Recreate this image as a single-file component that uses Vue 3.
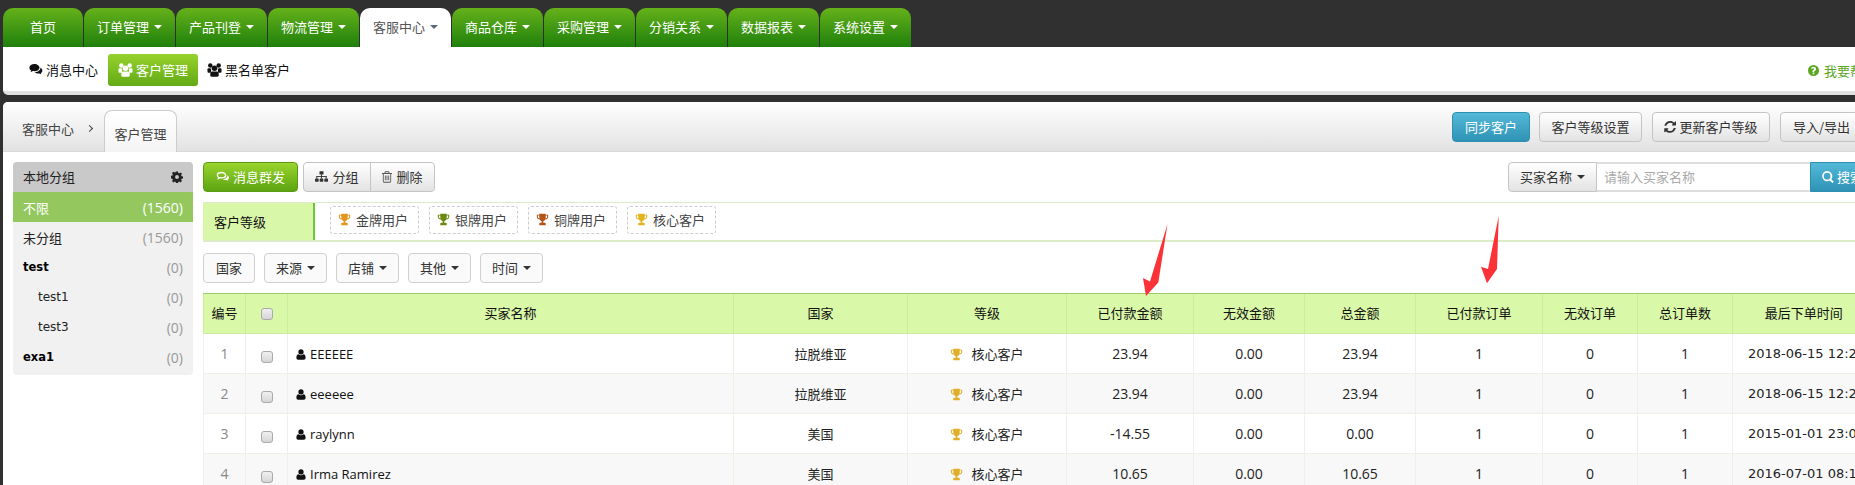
<script setup>
const navItems = [
  { name: '首页', plain: true, w: 'first' },
  { name: '订单管理' }, { name: '产品刊登' }, { name: '物流管理' },
  { name: '客服中心', active: true }, { name: '商品仓库' }, { name: '采购管理' },
  { name: '分销关系' }, { name: '数据报表' }, { name: '系统设置' }
]
const groups = [
  { name: '不限', count: '(1560)', cls: 'on' },
  { name: '未分组', count: '(1560)' },
  { name: 'test', count: '(0)', cls: 'bold' },
  { name: 'test1', count: '(0)', cls: 'sub' },
  { name: 'test3', count: '(0)', cls: 'sub' },
  { name: 'exa1', count: '(0)', cls: 'bold' }
]
const levels = [
  { name: '金牌用户', color: '#e2961f' },
  { name: '银牌用户', color: '#6c8a10' },
  { name: '铜牌用户', color: '#b0541a' },
  { name: '核心客户', color: '#e2b420' }
]
const filters = [
  { name: '国家' }, { name: '来源', caret: true }, { name: '店铺', caret: true },
  { name: '其他', caret: true }, { name: '时间', caret: true }
]
const cols = [42, 42, 446, 174, 159, 127, 111, 111, 127, 95, 95, 142]
const heads = ['编号', '', '买家名称', '国家', '等级', '已付款金额', '无效金额', '总金额', '已付款订单', '无效订单', '总订单数', '最后下单时间']
const rows = [
  ['1', 'EEEEEE', '拉脱维亚', '23.94', '0.00', '23.94', '1', '0', '1', '2018-06-15 12:26:11'],
  ['2', 'eeeeee', '拉脱维亚', '23.94', '0.00', '23.94', '1', '0', '1', '2018-06-15 12:26:11'],
  ['3', 'raylynn', '美国', '-14.55', '0.00', '0.00', '1', '0', '1', '2015-01-01 23:05:42'],
  ['4', 'Irma Ramirez', '美国', '10.65', '0.00', '10.65', '1', '0', '1', '2016-07-01 08:15:20']
]
</script>

<template>
  <div class="page">
    <svg class="sprite" width="0" height="0">
      <defs>
        <symbol id="i-trophy" viewBox="0 0 16 16"><path d="M4 1h8v1h3v2.500c0 2-1.500 3.300-3.500 3.600C11 9 10 9.800 9 10.100V12h1.500c.8 0 1.500.5 1.500 1.300V15H4v-1.700C4 12.500 4.700 12 5.500 12H7v-1.900C6 9.800 5 9 4.500 8.100 2.500 7.800 1 6.500 1 4.500V2h3V1zM2.300 3.200v1.300c0 1.100.8 2 2 2.300C4.100 6 4 4.600 4 3.200H2.300zm9.700 0c0 1.400-.1 2.800-.3 3.600 1.200-.3 2-1.200 2-2.300V3.200H12z"/></symbol>
        <symbol id="i-user" viewBox="0 0 14 16"><circle cx="7" cy="4.300" r="3.800"/><path d="M3.400 7.600C4.300 8.600 5.600 9.200 7 9.200s2.700-.6 3.600-1.600c2.200.2 3.100 2.300 3.100 5.200 0 1.700-1 2.900-2.600 2.900H2.900C1.300 15.700.3 14.500.3 12.800c0-2.900.9-5 3.100-5.200z"/></symbol>
        <symbol id="i-group" viewBox="0 0 16 15"><circle cx="3.500" cy="2.600" r="2.400"/><circle cx="12.500" cy="2.600" r="2.400"/><circle cx="8" cy="5.600" r="3"/><rect x="0.500" y="5.500" width="3.800" height="5" rx="1.200"/><rect x="11.700" y="5.500" width="3.800" height="5" rx="1.200"/><rect x="3.500" y="9" width="9" height="5.800" rx="1.800"/></symbol>
        <symbol id="i-comments" viewBox="0 0 18 16"><path d="M7 1C3.300 1 .5 3 .5 5.700c0 1.500.9 2.900 2.400 3.800-.2.700-.6 1.300-1.100 1.800 1.200-.2 2.300-.7 3.200-1.400.6.100 1.300.2 2 .2 3.700 0 6.500-2 6.500-4.400S10.700 1 7 1z"/><path d="M14.700 5.500c.4 3-2.500 5.700-7.200 6 .9 1 2.500 1.600 4.200 1.600.5 0 1 0 1.500-.1.800.6 1.800 1 2.800 1.200-.4-.4-.7-1-.9-1.500 1.300-.7 2.100-1.900 2.100-3.100 0-1.700-1-3-2.500-4.100z"/></symbol>
        <symbol id="i-comments-o" viewBox="0 0 18 16"><path fill="none" stroke="currentColor" stroke-width="1.800" d="M7 2C3.800 2 1.500 3.700 1.500 5.700c0 1.200.8 2.300 2 3-.1.500-.3.900-.5 1.300.8-.2 1.500-.6 2.100-1 .6.100 1.200.2 1.900.2 3.200 0 5.500-1.700 5.500-3.500S10.200 2 7 2z"/><path d="M14.800 5.600c.4 2.600-2.400 5-5.900 5.300.7.700 1.900 1.100 3.100 1.100.5 0 .9 0 1.400-.1.600.5 1.500.9 2.400 1.100-.3-.4-.6-.9-.7-1.300 1.100-.6 1.900-1.600 1.900-2.700 0-1.300-.8-2.400-2.200-3.400z"/></symbol>
        <symbol id="i-cog" viewBox="0 0 16 16"><path fill-rule="evenodd" d="M6.700.5h2.600l.4 2 1.300.6 1.800-1.100 1.800 1.800-1.100 1.800.6 1.300 2 .4v2.600l-2 .4-.6 1.300 1.100 1.800-1.800 1.800-1.800-1.100-1.300.6-.4 2H6.700l-.4-2-1.300-.6-1.800 1.100-1.800-1.800 1.100-1.800-.6-1.300-2-.4V6.300l2-.4.6-1.300L1.400 2.800l1.800-1.800L5 2.100l1.300-.6.4-2zM8 5.400a2.600 2.600 0 1 0 0 5.200 2.600 2.600 0 0 0 0-5.200z"/></symbol>
        <symbol id="i-sitemap" viewBox="0 0 16 13"><rect x="5.500" y="0" width="5" height="4" rx=".6"/><rect x="0" y="9" width="4.500" height="4" rx=".6"/><rect x="5.750" y="9" width="4.500" height="4" rx=".6"/><rect x="11.500" y="9" width="4.500" height="4" rx=".6"/><rect x="7.400" y="4" width="1.200" height="5"/><rect x="1.700" y="6" width="1.200" height="3"/><rect x="13.100" y="6" width="1.200" height="3"/><rect x="1.700" y="6" width="12.600" height="1.100"/></symbol>
        <symbol id="i-trash" viewBox="0 0 14 16"><path fill-rule="evenodd" d="M5 0h4c.6 0 1 .4 1.200 1l.5 1.500H14v1.200h-1.200V14c0 1.100-.8 2-1.700 2H2.900c-.9 0-1.700-.9-1.700-2V3.700H0V2.500h3.300L3.800 1C4 .4 4.400 0 5 0zm.1 1.300-.4 1.200h4.600l-.4-1.200H5.100zM2.400 3.700V14c0 .5.300.8.500.8h8.200c.2 0 .5-.3.500-.8V3.700H2.400zM4 6h1.200v6.700H4V6zm2.400 0h1.200v6.700H6.400V6zm2.400 0H10v6.700H8.800V6z"/></symbol>
        <symbol id="i-refresh" viewBox="0 0 14 14"><path d="M13.700 8.500C13 11.600 10.300 13.800 7 13.800c-1.800 0-3.500-.7-4.700-1.900l-1.100 1.100c-.4.400-.9.100-.9-.4V8.900c0-.3.200-.5.500-.5h3.700c.5 0 .8.500.4.900L3.800 10.400c.8.800 2 1.300 3.200 1.300 1.800 0 3.400-1.100 4.100-2.700.1-.3.200-.5.300-.8h2.100c.1 0 .2.200.2.300zM14 1v3.700c0 .3-.2.500-.5.500H9.800c-.5 0-.8-.5-.4-.9l1.100-1.100C9.700 2.400 8.500 2 7.200 2 5.400 2 3.800 3.100 3.100 4.700c-.1.300-.2.500-.3.800H.7C.6 5.500.5 5.300.5 5.200 1.200 2.100 3.900 0 7.200 0c1.800 0 3.500.7 4.800 1.900L13.100.6c.4-.4.900-.1.900.4z"/></symbol>
        <symbol id="i-search" viewBox="0 0 14 14"><path fill-rule="evenodd" d="M6 0a6 6 0 0 1 4.800 9.600l3 3-1.600 1.600-3-3A6 6 0 1 1 6 0zm0 2.100a3.900 3.900 0 1 0 0 7.800 3.900 3.900 0 0 0 0-7.800z"/></symbol>
        <symbol id="i-help" viewBox="0 0 14 14"><path fill-rule="evenodd" d="M7 0a7 7 0 1 1 0 14A7 7 0 0 1 7 0zM6 9.700v2h2v-2H6zm1-7.400c-1.600 0-2.800.8-3.200 1.900l1.400 1c.4-.7.900-1.100 1.600-1.100.7 0 1.200.3 1.200.9 0 .5-.4.800-1 1.200-.8.500-1.300 1.100-1.300 2v.8h2v-.5c0-.4.300-.6.900-1 .8-.5 1.500-1.200 1.500-2.500 0-1.700-1.500-2.700-3.100-2.700z"/></symbol>
      </defs>
    </svg>

    <nav class="nav">
      <a v-for="n in navItems" :key="n.name" class="tab" :class="{ active: n.active, first: n.w }">
        {{ n.name }}<i v-if="!n.plain" class="caret"></i>
      </a>
    </nav>

    <div class="subbar">
      <a class="sub"><svg class="ic c"><use href="#i-comments" /></svg>消息中心</a>
      <a class="sub on"><svg class="ic g"><use href="#i-group" /></svg>客户管理</a>
      <a class="sub"><svg class="ic g"><use href="#i-group" /></svg>黑名单客户</a>
      <a class="help"><svg class="ic h"><use href="#i-help" /></svg>我要帮助</a>
    </div>

    <section class="panel">
      <header class="head">
        <span class="crumb">客服中心<i class="chev"></i></span>
        <span class="crumb-tab">客户管理</span>
        <div class="head-btns">
          <button class="btn blue">同步客户</button>
          <button class="btn">客户等级设置</button>
          <button class="btn"><svg class="ic r"><use href="#i-refresh" /></svg>更新客户等级</button>
          <button class="btn wide">导入/导出</button>
        </div>
      </header>

      <div class="body">
        <aside class="side">
          <div class="side-head">本地分组<svg class="ic cog"><use href="#i-cog" /></svg></div>
          <div v-for="g in groups" :key="g.name" class="grp" :class="g.cls">
            <span class="gname">{{ g.name }}</span><span class="cnt">{{ g.count }}</span>
          </div>
        </aside>

        <main class="main">
          <div class="tools">
            <button class="btn green"><svg class="ic c"><use href="#i-comments-o" /></svg>消息群发</button>
            <div class="btn-group">
              <button class="btn"><svg class="ic s"><use href="#i-sitemap" /></svg>分组</button>
              <button class="btn"><svg class="ic t"><use href="#i-trash" /></svg>删除</button>
            </div>
            <div class="search">
              <button class="btn sel">买家名称<i class="caret dark"></i></button>
              <div class="input">请输入买家名称</div>
              <button class="btn blue go"><svg class="ic se"><use href="#i-search" /></svg>搜索</button>
            </div>
          </div>

          <div class="levels">
            <div class="lv-label">客户等级</div>
            <div v-for="l in levels" :key="l.name" class="lv">
              <svg class="ic tr" :style="{ color: l.color }"><use href="#i-trophy" /></svg>{{ l.name }}
            </div>
          </div>

          <div class="filters">
            <button v-for="f in filters" :key="f.name" class="fbtn">{{ f.name }}<i v-if="f.caret" class="caret dark"></i></button>
          </div>

          <table class="tbl">
            <colgroup><col v-for="(c, i) in cols" :key="i" :style="{ width: c + 'px' }" /></colgroup>
            <thead>
              <tr>
                <th v-for="(h, i) in heads" :key="i"><i v-if="i === 1" class="cb"></i>{{ h }}</th>
              </tr>
            </thead>
            <tbody>
              <tr v-for="r in rows" :key="r[0]">
                <td class="idx">{{ r[0] }}</td>
                <td><i class="cb low"></i></td>
                <td class="name"><svg class="ic u"><use href="#i-user" /></svg>{{ r[1] }}</td>
                <td class="cn">{{ r[2] }}</td>
                <td class="cn"><svg class="ic tr core"><use href="#i-trophy" /></svg>核心客户</td>
                <td>{{ r[3] }}</td>
                <td>{{ r[4] }}</td>
                <td>{{ r[5] }}</td>
                <td>{{ r[6] }}</td>
                <td>{{ r[7] }}</td>
                <td>{{ r[8] }}</td>
                <td class="time">{{ r[9] }}</td>
              </tr>
            </tbody>
          </table>
        </main>
      </div>
    </section>

    <svg class="arrow a1" viewBox="0 0 40 80"><path d="M37.500 4 L28.300 62.500 L16 76 L13 58 L20 61.500 Z" /></svg>
    <svg class="arrow a2" viewBox="0 0 40 80"><path d="M28.700 6 L27 59 L17 73.300 L11 56.700 L18 59 Z" /></svg>
  </div>
</template>

<style>
html, body { margin: 0; background: #303030; }
</style>

<style scoped>
.page {
  position: relative;
  width: 1855px;
  height: 485px;
  overflow: hidden;
  background: #303030;
  padding-top: 8px;
  box-sizing: border-box;
  font-family: "Noto Sans CJK SC", "DejaVu Sans", sans-serif;
  font-size: 13px;
  color: #333;
}
.sprite { position: absolute; }
.ic { fill: currentColor; display: inline-block; flex: none; }
.nav { display: flex; gap: 1px; padding-left: 3px; height: 39px; }
.tab {
  width: 91px;
  height: 39px;
  box-sizing: border-box;
  padding-bottom: 2px;
  border-radius: 10px 10px 0 0;
  background: linear-gradient(#65b11a, #1f800c);
  color: #fff;
  display: flex;
  align-items: center;
  justify-content: center;
  line-height: 1;
}
.tab.first { width: 80px; }
.tab.active { background: #fff; color: #555; }
.caret {
  display: inline-block;
  width: 0;
  height: 0;
  margin-left: 5px;
  border-left: 4px solid transparent;
  border-right: 4px solid transparent;
  border-top: 4px solid #fff;
}
.tab.active .caret { border-top-color: #5a6a7a; }
.caret.dark { border-top-color: #333; }
.subbar {
  margin-left: 3px;
  width: 1880px;
  height: 48px;
  background: #fff;
  box-sizing: border-box;
  border-bottom: 4px solid #e0e0e0;
  border-radius: 0 0 5px 5px;
  display: flex;
  align-items: flex-start;
  padding: 7px 0 0 26px;
  color: #111;
}
.sub {
  height: 32px;
  box-sizing: border-box;
  padding: 0 10px 1px 0;
  display: flex;
  align-items: center;
  border-radius: 3px;
}
.sub.on {
  width: 90px;
  padding: 0 0 1px 10px;
  margin-right: 9px;
  background: linear-gradient(#96d22c, #63aa16);
  color: #fff;
}
.sub .c { width: 14px; height: 13px; margin-right: 3px; }
.sub .g { width: 15px; height: 14px; margin-right: 3px; }
.help { margin-left: auto; margin-right: 3px; margin-top: 7px; color: #5aa61e; display: flex; align-items: center; width: 72px; white-space: nowrap; }
.help .h { width: 11px; height: 11px; margin-right: 5px; }
.panel { margin: 7px 0 0 3px; width: 1871px; background: #fff; border-radius: 5px 0 0 0; height: 383px; }
.head {
  height: 50px;
  box-sizing: border-box;
  border-bottom: 1px solid #d8d8d8;
  border-radius: 5px 0 0 0;
  background: linear-gradient(#fff, #e2e2e2);
  display: flex;
  position: relative;
}
.crumb { margin: 19px 0 0 19px; line-height: 16px; color: #444; width: 82px; flex: none; position: relative; }
.chev {
  position: absolute;
  left: 65px;
  top: 5px;
  width: 4px;
  height: 4px;
  border-top: 1px solid #444;
  border-right: 1px solid #444;
  transform: rotate(45deg);
}
.crumb-tab {
  margin: 8px 0 -1px 0;
  width: 73px;
  box-sizing: border-box;
  border: 1px solid #ccc;
  border-bottom: 0;
  border-radius: 8px 8px 0 0;
  background: linear-gradient(#fff, #f4f4f4);
  text-align: center;
  padding-top: 14px;
  line-height: 18px;
  color: #444;
}
.head-btns { margin-left: auto; margin-top: 10px; display: flex; gap: 10px; height: 30px; }
.btn {
  font: inherit;
  height: 30px;
  padding: 0 0 1px;
  border: 1px solid #c4c4c4;
  border-radius: 4px;
  background: linear-gradient(#fff, #e3e3e3);
  color: #333;
  display: inline-flex;
  align-items: center;
  justify-content: center;
  white-space: nowrap;
  box-sizing: border-box;
}
.btn.blue { background: linear-gradient(#54b8d8, #2f93b6); border-color: #2f8fb0; color: #fff; }
.head-btns .btn { width: 103px; }
.head-btns .blue { width: 78px; margin-right: -1px; }
.head-btns .btn:nth-child(3) { width: 118px; }
.head-btns .wide { width: 94px; justify-content: flex-start; padding-left: 12px; }
.r { width: 12px; height: 12px; margin-right: 3px; }
.body { display: flex; padding: 10px 0 0 10px; gap: 10px; }
.side { width: 180px; height: 213px; flex: none; background: #f1f1f1; border-radius: 4px; overflow: hidden; }
.side-head {
  height: 30px;
  box-sizing: border-box;
  padding: 0 10px 1px;
  background: #c9c9c9;
  display: flex;
  align-items: center;
  justify-content: space-between;
  color: #222;
}
.cog { width: 12px; height: 12px; color: #222; }
.grp { height: 30px; display: flex; align-items: center; justify-content: space-between; padding: 0 10px; color: #222; }
.grp .cnt { color: #999; font-family: "Open Sans", sans-serif; font-size: 14px; }
.grp.on { background: #94c85f; color: #fff; }
.grp.on .cnt { color: #fff; }
.grp.bold .gname { font: bold 11.5px "DejaVu Sans", sans-serif; color: #000; }
.grp.sub .gname { font: 12px "DejaVu Sans", sans-serif; padding-left: 15px; }
.main { width: 1671px; flex: none; }
.tools { display: flex; height: 30px; }
.btn.green {
  width: 95px;
  background: linear-gradient(#98d42c, #5da412);
  border-color: #5c9c14;
  color: #fff;
  margin-right: 5px;
}
.green .c { width: 14px; height: 12px; margin-right: 3px; }
.btn-group { display: flex; }
.btn-group .btn { width: 68px; border-radius: 4px 0 0 4px; }
.btn-group .btn + .btn { width: 65px; margin-left: -1px; border-radius: 0 4px 4px 0; }
.s { width: 13px; height: 11px; margin-right: 4px; color: #333; }
.t { width: 10px; height: 12px; margin-right: 4px; color: #555; }
.search { margin-left: auto; display: flex; }
.btn.sel { width: 89px; border-radius: 4px 0 0 4px; }
.input {
  width: 213px;
  height: 30px;
  box-sizing: border-box;
  border: 2px solid #ddd;
  border-left: 0;
  border-right: 0;
  padding: 0 7px;
  line-height: 25px;
  color: #aaa;
}
.btn.go { width: 64px; border-radius: 0 4px 4px 0; justify-content: flex-start; padding-left: 11px; }
.se { width: 12px; height: 12px; margin-right: 3px; }
.levels {
  margin-top: 10px;
  height: 40px;
  box-sizing: border-box;
  border-top: 1px solid #dcecc8;
  border-bottom: 2px solid #dcecc8;
  display: flex;
  align-items: center;
  gap: 10px;
}
.lv-label {
  width: 112px;
  height: 100%;
  margin-right: 5px;
  box-sizing: border-box;
  background: #d9f7a8;
  border-right: 2px solid #6cc63a;
  padding: 3px 0 0 11px;
  line-height: 32px;
  color: #111;
}
.lv {
  width: 89px;
  height: 28px;
  margin-top: -3px;
  box-sizing: border-box;
  border: 1px dashed #ccc;
  border-radius: 3px;
  display: flex;
  align-items: center;
  padding: 0 0 1px 7px;
  color: #444;
}
.tr { width: 13px; height: 13px; margin-right: 5px; }
.filters { margin-top: 11px; display: flex; gap: 9px; }
.fbtn {
  font: inherit;
  width: 63px;
  height: 30px;
  padding: 0 0 1px;
  box-sizing: border-box;
  border: 1px solid #d0d0d0;
  border-radius: 4px;
  background: #fafafa;
  color: #333;
  display: inline-flex;
  align-items: center;
  justify-content: center;
}
.fbtn:first-child { width: 52px; }
.tbl {
  margin-top: 10px;
  width: 1671px;
  table-layout: fixed;
  border-collapse: collapse;
  color: #222;
}
th {
  box-sizing: border-box;
  height: 40px;
  padding: 0 0 2px;
  font-weight: normal;
  background: #d9f8a8;
  border-top: 1px solid #9ccb6a;
  border-bottom: 1px solid #cdeaa0;
  border-left: 1px solid #cbeda0;
  color: #111;
  text-align: center;
}
td {
  box-sizing: border-box;
  height: 40px;
  padding: 0;
  text-align: center;
  border-left: 1px solid #eef2e6;
  border-bottom: 1px solid #eef2e6;
  font-family: "Open Sans", "Noto Sans CJK SC", sans-serif;
  font-size: 14px;
}
td.cn { font-family: "Noto Sans CJK SC", sans-serif; font-size: 13px; }
tbody tr:nth-child(even) td { background: #f8f8f8; }
td.idx { color: #888; }
td.name { text-align: left; padding-left: 8px; font-size: 13px; color: #111; }
.u { width: 10px; height: 11px; margin-right: 4px; color: #111; vertical-align: -1px; }
.core { color: #dfaf2a; margin-right: 8px; vertical-align: -2px; }
td.time { text-align: left; padding-left: 15px; white-space: nowrap; font-family: "DejaVu Sans", sans-serif; font-size: 13px; }
.cb {
  display: inline-block;
  width: 12px;
  height: 12px;
  box-sizing: border-box;
  border: 1px solid #aaa;
  border-radius: 3px;
  background: linear-gradient(#f0f0f0, #d5d5d5);
  vertical-align: middle;
}
.cb.low { margin-top: 4px; }
.arrow { position: absolute; width: 40px; height: 80px; fill: #fb3237; }
.a1 { left: 1130px; top: 220px; }
.a2 { left: 1470px; top: 210px; }
</style>
